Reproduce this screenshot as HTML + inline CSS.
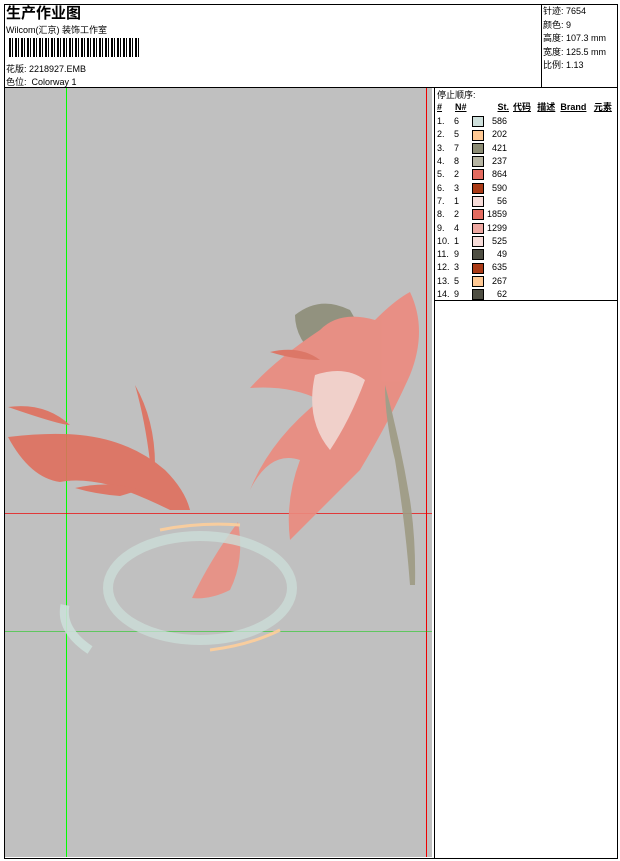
<!DOCTYPE html>
<html><head><meta charset="utf-8"><style>
body{margin:0;width:620px;height:861px;background:#fff;position:relative;overflow:hidden;font-family:"Liberation Sans","Noto Sans CJK SC",sans-serif;color:#000}
.a{position:absolute}
.t{font-size:9px;white-space:nowrap}
table{border-collapse:collapse;font-size:9px}
td{padding:0;height:13.3px;line-height:13px}
.sw{display:inline-block;width:10px;height:9px;border:1px solid #000;vertical-align:middle}
</style></head><body>
<div class="a" style="left:4px;top:4px;width:612px;height:853px;border:1px solid #000"></div>
<div class="a" style="left:4px;top:87px;width:613px;height:1px;background:#000"></div>
<div class="a" style="left:541px;top:4px;width:1px;height:83px;background:#000"></div>
<div class="a" style="left:6px;top:2px;font-size:15px;font-weight:bold">生产作业图</div>
<div class="a t" style="left:6px;top:23px">Wilcom(汇京) 装饰工作室</div>
<div class="a" style="left:9px;top:38px;width:132px;height:19px;background:repeating-linear-gradient(90deg,#000 0 2px,#fff 2px 3px,#000 3px 4px,#fff 4px 6px)"></div>
<div class="a t" style="left:6px;top:62px">花版: 2218927.EMB</div>
<div class="a t" style="left:6px;top:75px">色位:&nbsp; Colorway 1</div>
<div class="a t" style="left:543px;top:5px;line-height:13.5px">针迹: 7654<br>颜色: 9<br>高度: 107.3 mm<br>宽度: 125.5 mm<br>比例: 1.13</div>
<div class="a" style="left:5px;top:88px;width:427px;height:769px;background:#c0c0c0"></div>
<div class="a" style="left:432px;top:88px;width:3px;height:769px;background:#fff"></div>
<div class="a" style="left:434px;top:88px;width:1px;height:770px;background:#000"></div>
<div class="a" style="left:435px;top:300px;width:182px;height:1px;background:#000"></div>
<div class="a" style="left:66px;top:88px;width:1px;height:769px;background:#0f0"></div>
<div class="a" style="left:426px;top:88px;width:1px;height:769px;background:#e00"></div>
<div class="a" style="left:5px;top:513px;width:427px;height:1px;background:#e00;opacity:.7"></div>
<div class="a" style="left:5px;top:631px;width:427px;height:1px;background:#0c0;opacity:.5"></div>
<svg class="a" style="left:5px;top:88px" width="427" height="769" viewBox="5 88 427 769">
<g opacity=".9">
<path d="M295 315 Q320 295 350 310 L370 345 Q350 365 320 360 Q295 340 295 315Z" fill="#8e8e78"/>
<path d="M8 407 Q45 402 70 425 Q60 425 8 407Z" fill="#e0705e"/>
<path d="M8 437 Q50 432 80 435 Q130 440 165 470 Q185 490 190 510 L170 510 Q140 495 110 485 Q80 478 60 482 Q30 478 8 437Z" fill="#e0705e"/>
<path d="M75 488 Q110 480 140 490 L120 496 Q95 494 75 488Z" fill="#e0705e"/>
<path d="M135 385 Q155 420 155 465 L150 462 Q145 420 135 385Z" fill="#e0705e"/>
<path d="M320 330 Q340 310 375 320 Q395 300 410 292 Q428 330 410 375 Q390 420 360 470 Q330 500 290 540 Q285 500 300 460 Q270 450 250 490 Q270 440 320 400 Q290 385 250 388 Q275 360 320 330Z" fill="#ec8a7e"/>
<path d="M270 352 Q300 345 320 360 Q295 360 270 352Z" fill="#e0705e"/>
<path d="M315 375 Q345 365 365 380 Q350 420 330 450 Q305 420 315 375Z" fill="#f6d2cc"/>
<path d="M385 385 Q400 440 410 500 Q416 540 415 585 L410 585 Q405 520 395 460 Q385 420 385 385Z" fill="#9e9b84"/>
<path d="M192 598 Q210 560 238 522 Q245 560 230 590 Q210 600 192 598Z" fill="#eb8f82"/>
<ellipse cx="200" cy="588" rx="92" ry="52" fill="none" stroke="#cde0da" stroke-width="10" opacity=".8"/>
<path d="M160 530 Q200 522 240 525" stroke="#ffcf9b" stroke-width="3" fill="none"/>
<path d="M210 650 Q250 645 280 630" stroke="#ffcf9b" stroke-width="3" fill="none"/>
<path d="M65 605 Q60 630 90 650" stroke="#cde0da" stroke-width="9" fill="none"/>
</g></svg>
<div class="a t" style="left:437px;top:88px">停止顺序:</div>
<table class="a" style="left:437px;top:101px;width:180px">
<tr style="font-weight:bold;text-decoration:underline"><td style="width:18px">#</td><td style="width:24px">N#</td><td style="width:30px;text-align:right">St.</td><td style="padding-left:4px">代码</td><td>描述</td><td>Brand</td><td>元素</td></tr>
</table>
<table class="a" style="left:437px;top:115px">
<tr><td style="width:17px">1.</td><td style="width:18px">6</td><td><span class="sw" style="background:#cfe0dc"></span></td><td style="width:23px;text-align:right">586</td></tr>
<tr><td>2.</td><td>5</td><td><span class="sw" style="background:#ffc994"></span></td><td style="text-align:right">202</td></tr>
<tr><td>3.</td><td>7</td><td><span class="sw" style="background:#8c8c74"></span></td><td style="text-align:right">421</td></tr>
<tr><td>4.</td><td>8</td><td><span class="sw" style="background:#b6b4a2"></span></td><td style="text-align:right">237</td></tr>
<tr><td>5.</td><td>2</td><td><span class="sw" style="background:#e46b5f"></span></td><td style="text-align:right">864</td></tr>
<tr><td>6.</td><td>3</td><td><span class="sw" style="background:#aa3a16"></span></td><td style="text-align:right">590</td></tr>
<tr><td>7.</td><td>1</td><td><span class="sw" style="background:#f7dcd9"></span></td><td style="text-align:right">56</td></tr>
<tr><td>8.</td><td>2</td><td><span class="sw" style="background:#e46b5f"></span></td><td style="text-align:right">1859</td></tr>
<tr><td>9.</td><td>4</td><td><span class="sw" style="background:#eea7a0"></span></td><td style="text-align:right">1299</td></tr>
<tr><td>10.</td><td>1</td><td><span class="sw" style="background:#f7dcd9"></span></td><td style="text-align:right">525</td></tr>
<tr><td>11.</td><td>9</td><td><span class="sw" style="background:#4e4e42"></span></td><td style="text-align:right">49</td></tr>
<tr><td>12.</td><td>3</td><td><span class="sw" style="background:#aa3a16"></span></td><td style="text-align:right">635</td></tr>
<tr><td>13.</td><td>5</td><td><span class="sw" style="background:#ffc994"></span></td><td style="text-align:right">267</td></tr>
<tr><td>14.</td><td>9</td><td><span class="sw" style="background:#4e4e42"></span></td><td style="text-align:right">62</td></tr>
</table>
</body></html>
